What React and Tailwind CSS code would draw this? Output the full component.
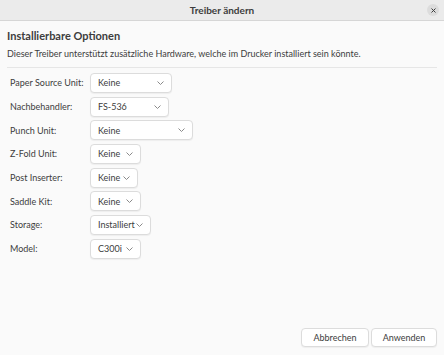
const rows = [
  { label: 'Paper Source Unit:', value: 'Keine', w: 'w-[82px]' },
  { label: 'Nachbehandler:', value: 'FS-536', w: 'w-[79px]' },
  { label: 'Punch Unit:', value: 'Keine', w: 'w-[103px]' },
  { label: 'Z-Fold Unit:', value: 'Keine', w: 'w-[51px]' },
  { label: 'Post Inserter:', value: 'Keine', w: 'w-[48px]' },
  { label: 'Saddle Kit:', value: 'Keine', w: 'w-[51px]' },
  { label: 'Storage:', value: 'Installiert', w: 'w-[61px]' },
  { label: 'Model:', value: 'C300i', w: 'w-[51px]' },
];

function Chevron() {
  return (
    <svg width="7" height="4" viewBox="0 0 7 4" className="shrink-0">
      <path d="M0.5 0.5 L3.5 3.5 L6.5 0.5" fill="none" stroke="#8a8a8a" strokeWidth="1" />
    </svg>
  );
}

function Dropdown({ value, w }) {
  return (
    <div className={`${w} h-[20px] flex items-center justify-between pl-[7px] pr-[7px] bg-white border border-[#dcdcdc] rounded-[4px] shadow-[0_1px_1px_rgba(0,0,0,0.05)] text-[9px] text-[#3d3d3d]`}>
      <span className="whitespace-nowrap">{value}</span>
      <Chevron />
    </div>
  );
}

export default function App() {
  return (
    <div className="w-[444px] h-[355px] flex flex-col bg-[#fafafa] font-['Lato',sans-serif] overflow-hidden">
      <div className="h-[21px] shrink-0 flex items-center justify-center relative bg-[#ebebeb] border-b border-[#d6d6d6]">
        <span className="text-[10px] font-bold text-[#3d3d3d]">Treiber ändern</span>
        <div className="absolute right-[5px] top-[4px] w-[12px] h-[12px] rounded-full bg-[#dcdcdc] flex items-center justify-center">
          <svg width="5" height="5" viewBox="0 0 5 5">
            <path d="M0.5 0.5 L4.5 4.5 M4.5 0.5 L0.5 4.5" stroke="#3d3d3d" strokeWidth="1" />
          </svg>
        </div>
      </div>

      <div className="flex-1 flex flex-col px-[7px]">
        <div className="pt-[7px] text-[11px] font-bold text-[#3d3d3d] leading-[16px]">Installierbare Optionen</div>
        <div className="pt-[4px] text-[9px] text-[#3d3d3d] leading-[12px]">
          Dieser Treiber unterstützt zusätzliche Hardware, welche im Drucker installiert sein könnte.
        </div>
        <div className="mt-[7px] border-t border-[#e6e6e6]" />

        <div className="pt-[5px] pl-[3px] flex flex-col gap-[3.7px]">
          {rows.map((r) => (
            <div key={r.label} className="flex items-center h-[20px]">
              <div className="w-[80px] text-[9px] text-[#3d3d3d] whitespace-nowrap">{r.label}</div>
              <Dropdown value={r.value} w={r.w} />
            </div>
          ))}
        </div>

        <div className="mt-auto mb-[8px] flex justify-end gap-[2px]">
          <button className="w-[68px] h-[19px] bg-white border border-[#dcdcdc] rounded-[4px] text-[9px] text-[#3d3d3d] shadow-[0_1px_1px_rgba(0,0,0,0.05)]">
            Abbrechen
          </button>
          <button className="w-[66px] h-[19px] bg-white border border-[#dcdcdc] rounded-[4px] text-[9px] text-[#3d3d3d] shadow-[0_1px_1px_rgba(0,0,0,0.05)]">
            Anwenden
          </button>
        </div>
      </div>
    </div>
  );
}
